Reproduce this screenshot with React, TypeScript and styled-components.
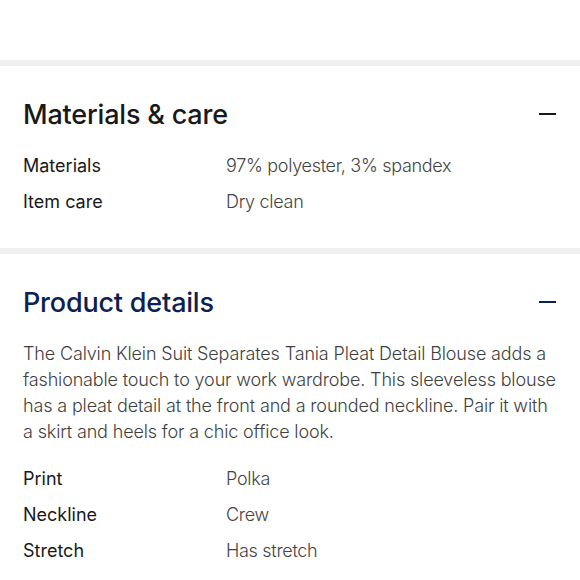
import styled, { createGlobalStyle } from "styled-components";

const Global = createGlobalStyle`
    html, body {
        margin: 0;
        padding: 0;
        background: #ffffff;
    }
    body {
        font-family: Inter, "Noto Sans", sans-serif;
        -webkit-font-smoothing: antialiased;
    }
`;

const Page = styled.div`
    width: 580px;
    height: 580px;
    overflow: hidden;
    background: #ffffff;
`;

const TopSpace = styled.div`
    height: 60px;
`;

const Divider = styled.div`
    height: 6px;
    background: #f0f0f2;
`;

const Section = styled.section`
    padding: 31px 23px 29px 23px;
`;

const Header = styled.div<{ $gap: number }>`
    display: flex;
    align-items: center;
    justify-content: space-between;
    height: 34px;
    margin-bottom: ${(p) => p.$gap}px;
`;

const Title = styled.h2<{ $color: string }>`
    margin: 0;
    font-size: 27px;
    font-weight: 500;
    letter-spacing: -0.2px;
    color: ${(p) => p.$color};
`;

const Minus = styled.span<{ $color: string }>`
    display: block;
    width: 17px;
    height: 2px;
    margin-right: 1px;
    background: ${(p) => p.$color};
`;

const Description = styled.p`
    margin: 0 0 15px 0;
    font-size: 18px;
    font-weight: 350;
    line-height: 26px;
    color: #3f3f3f;
    letter-spacing: -0.15px;
`;

const Specs = styled.dl`
    margin: 0;
    display: grid;
    grid-template-columns: 203px 1fr;
    grid-auto-rows: 36px;
    align-items: center;
`;

const Label = styled.dt`
    margin: 0;
    font-size: 18px;
    font-weight: 380;
    color: #191919;
`;

const Value = styled.dd`
    margin: 0;
    font-size: 18px;
    font-weight: 350;
    letter-spacing: -0.3px;
    color: #444444;
`;

type Spec = [string, string];

const SpecList = ({ items }: { items: Spec[] }) => (
    <Specs>
        {items.map(([k, v]) => [
            <Label key={k + "-k"}>{k}</Label>,
            <Value key={k + "-v"}>{v}</Value>,
        ])}
    </Specs>
);

export default function App() {
    return (
        <Page>
            <Global />
            <TopSpace />
            <Divider />
            <Section>
                <Header $gap={16}>
                    <Title $color="#191919">Materials &amp; care</Title>
                    <Minus $color="#191919" />
                </Header>
                <SpecList
                    items={[
                        ["Materials", "97% polyester, 3% spandex"],
                        ["Item care", "Dry clean"],
                    ]}
                />
            </Section>
            <Divider />
            <Section>
                <Header $gap={22}>
                    <Title $color="#0d2150">Product details</Title>
                    <Minus $color="#0d2150" />
                </Header>
                <Description>
                    The Calvin Klein Suit Separates Tania Pleat Detail Blouse adds a
                    fashionable touch to your work wardrobe. This sleeveless blouse
                    has a pleat detail at the front and a rounded neckline. Pair it with
                    a skirt and heels for a chic office look.
                </Description>
                <SpecList
                    items={[
                        ["Print", "Polka"],
                        ["Neckline", "Crew"],
                        ["Stretch", "Has stretch"],
                    ]}
                />
            </Section>
        </Page>
    );
}
